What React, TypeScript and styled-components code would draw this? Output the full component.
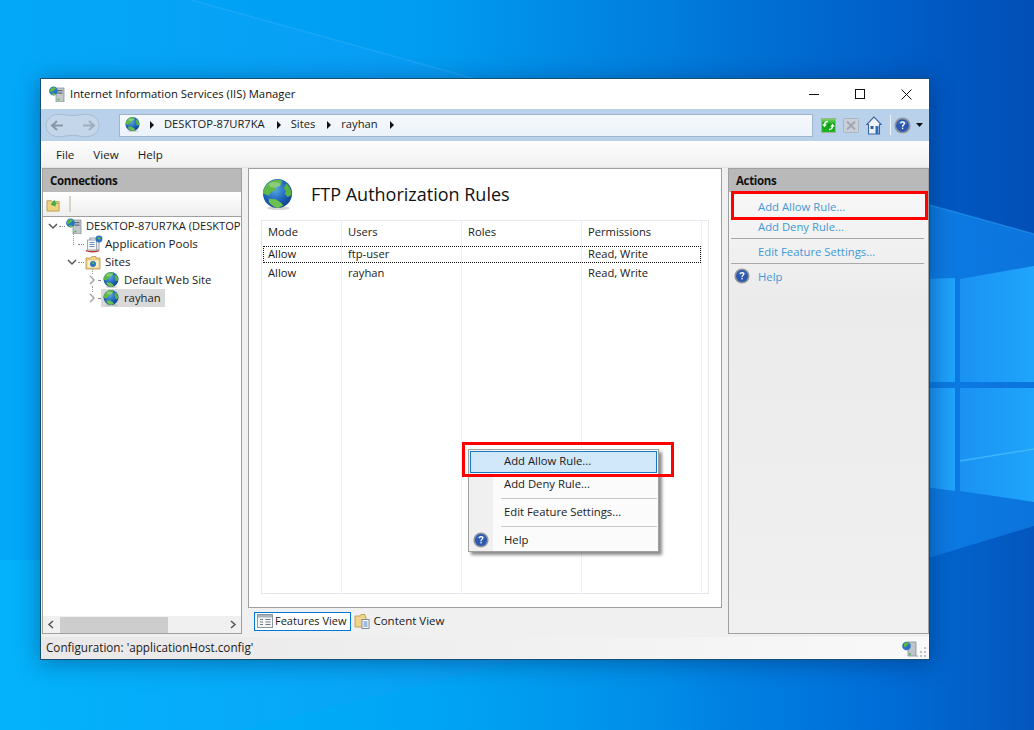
import React from 'react';
import styled, { createGlobalStyle } from 'styled-components';

const Global = createGlobalStyle`
  html, body { margin: 0; padding: 0; width: 1034px; height: 730px; overflow: hidden; }
  body { font-family: "Open Sans", "Noto Sans", "Liberation Sans", sans-serif; font-size: 11.3px; color: #1a1a1a; }
  #root { width: 1034px; height: 730px; }
`;

const Desktop = styled.div`
  position: relative; width: 1034px; height: 730px; overflow: hidden;
  padding: 78px 104px 70px 40px; box-sizing: border-box;
  background: #0a86d8;
`;
const Wallpaper = styled.svg`position: absolute; inset: 0; width: 1034px; height: 730px;`;
const Win = styled.div`
  position: relative; width: 890px; height: 582px; box-sizing: border-box; background: #f0f0f0;
  border: 1px solid #17506e; display: flex; flex-direction: column;
  box-shadow: 0 3px 22px rgba(0,20,60,.38);
`;
const TitleBar = styled.div`
  height: 30px; flex: none; background: #fff; display: flex; align-items: center; padding-left: 8px;
  font-size: 11.3px; color: #111;
`;
const TitleText = styled.span`margin-left: 5px; flex: 1; padding-bottom: 2px;`;
const WinBtn = styled.div`width: 46px; height: 30px; display: flex; align-items: center; justify-content: center;`;
const NavBar = styled.div`
  height: 32px; flex: none; background: #b9d1ea; display: flex; align-items: center; padding-left: 4px;
`;
const AddressBar = styled.div`
  width: 694px; height: 23px; box-sizing: border-box; margin-left: 19px; background: linear-gradient(#f6f9fc, #ecf3fa);
  border: 1px solid #9fb5cc; display: flex; align-items: center; padding: 0 0 1px 5px; font-size: 11.2px; flex: none;
`;
const Crumb = styled.span`margin-right: 12px; padding-bottom: 2px;`;
const Arrow = styled.span<{ $first?: boolean }>`
  width: 0; height: 0; border-left: 4px solid #111; border-top: 4px solid transparent; border-bottom: 4px solid transparent;
  margin: 0 10px 0 ${(p) => (p.$first ? '10px' : '0')};
`;
const NavIcons = styled.div`display: flex; align-items: center; margin-left: 8px;`;
const NavIconSlot = styled.span<{ $gap: number }>`display: flex; margin-left: ${(p) => p.$gap}px;`;
const MenuBar = styled.div`
  height: 27px; flex: none; box-sizing: border-box; background: linear-gradient(#fdfdfd, #f0f0f0); border-bottom: 1px solid #e3e3e3;
  display: flex; align-items: center; padding-left: 15px; gap: 19px; font-size: 11.6px;
`;
const Main = styled.div`flex: 1; display: flex; min-height: 0; padding-left: 1px;`;
const Panel = styled.div`
  width: 200px; height: 466px; flex: none; box-sizing: border-box; border: 1px solid #a0a0a0; display: flex; flex-direction: column;
`;
const ConnPanel = styled(Panel)`background: #fff;`;
const ActionsPanel = styled(Panel)`
  margin-left: 6px; width: 201px; background: linear-gradient(#fafafa, #ebebeb 28%, #f0f0f0);
`;
const PanelHead = styled.div`
  height: 23px; flex: none; background: #b9b9b9; font-weight: 700; font-size: 11.5px; padding: 0 7px;
  display: flex; align-items: center; color: #111; letter-spacing: -0.35px;
`;
const TreeBar = styled.div`
  height: 25px; flex: none; box-sizing: border-box; background: linear-gradient(#fff, #eee); border-bottom: 1px solid #a0a0a0;
  display: flex; align-items: center; padding-left: 3px;
`;
const TreeSep = styled.div`width: 2px; height: 16px; background: #d8d4c4; margin-left: 8px;`;
const Tree = styled.div`flex: 1; min-height: 0; overflow: hidden; position: relative;`;
const TreeRow = styled.div<{ $indent: number }>`
  height: 18px; display: flex; align-items: center; padding-left: ${(p) => p.$indent}px; white-space: nowrap; font-size: 11.6px;
`;
const TreeLine = styled.div<{ $x: number; $t: number; $h: number }>`
  position: absolute; left: ${(p) => p.$x}px; top: ${(p) => p.$t}px; height: ${(p) => p.$h}px; border-left: 1px dotted #999;
`;
const Chevron = styled.svg`width: 10px; height: 10px; flex: none;`;
const Dots = styled.span<{ $w?: number }>`width: ${(p) => p.$w ?? 6}px; flex: none; border-top: 1px dotted #888; margin: 0 1px;`;
const NodeLabel = styled.span<{ $m: number; $size?: number }>`
  margin-left: ${(p) => p.$m}px; padding-bottom: 2px; font-size: ${(p) => p.$size ?? 11.6}px;
`;
const SiteNode = styled.span<{ $sel?: boolean }>`
  display: flex; align-items: center; height: 18px; padding: 0 4px 0 2px; background: ${(p) => (p.$sel ? '#d9d9d9' : 'transparent')};
`;
const HScroll = styled.div`
  height: 17px; flex: none; background: #f0f0f0; display: flex; align-items: center; justify-content: space-between; position: relative;
  padding: 0 4px;
`;
const HThumb = styled.div`position: absolute; left: 17px; top: 1px; width: 108px; height: 16px; background: #cdcdcd;`;
const Center = styled.div`margin-left: 6px; width: 474px; flex: none; display: flex; flex-direction: column;`;
const Content = styled.div`
  height: 440px; flex: none; box-sizing: border-box; background: #fff; border: 1px solid #a0a0a0; padding: 0 12px; display: flex; flex-direction: column; position: relative;
`;
const Heading = styled.div`
  height: 51px; flex: none; display: flex; align-items: center; font-size: 18px; color: #111; padding-left: 1px;
`;
const HeadingText = styled.span`margin-left: 18px; margin-top: -1px;`;
const Grid = styled.div`
  flex: 1; margin-bottom: 13px; border: 1px solid #e4e8ee; display: flex; flex-direction: column; position: relative; font-size: 11.2px;
`;
const GridHead = styled.div`
  display: grid; grid-template-columns: 80px 120px 120px 120px 1fr; height: 25px; flex: none; align-items: center; box-sizing: border-box; padding: 0 0 5px 0; position: relative;
`;
const GridRow = styled.div<{ $focus?: boolean }>`
  display: grid; grid-template-columns: 78px 120px 120px 120px; height: 17px; align-items: center; position: relative; box-sizing: border-box;
  margin: 0 7px 2px 1px; padding: 0 0 2px 1px;
  ${(p) => (p.$focus ? 'outline: 1px dotted #111; outline-offset: -1px;' : '')}
`;
const Cell = styled.div<{ $first?: boolean }>`padding-left: ${(p) => (p.$first ? 4 : 6)}px;`;
const ColLine = styled.div<{ $x: number }>`position: absolute; top: 0; bottom: 0; left: ${(p) => p.$x}px; width: 1px; background: #eef0f6;`;
const ViewTabs = styled.div`height: 29px; flex: none; display: flex; align-items: center; padding: 0 0 2px 6px; box-sizing: border-box;`;
const ViewTab = styled.div<{ $active?: boolean }>`
  height: 19px; display: flex; align-items: center; gap: ${(p) => (p.$active ? 2 : 3)}px; padding: 0 4px 2px 2px; box-sizing: border-box;
  border: 1px solid ${(p) => (p.$active ? '#0078d7' : 'transparent')}; background: ${(p) => (p.$active ? '#fff' : 'transparent')};
  font-size: ${(p) => (p.$active ? 11 : 11.5)}px;
`;
const StatusBar = styled.div`
  height: 22px; flex: none; background: linear-gradient(90deg, #e9e7e7, #f9f9f9); display: flex; align-items: center; justify-content: space-between; padding: 0 1px 0 5px; font-size: 11.7px;
`;
const StatusText = styled.span`padding-bottom: 2px;`;
const ActionLink = styled.div`
  color: #3f99d8; padding: 0 0 2px 29px; box-sizing: border-box; height: 20px; display: flex; align-items: center; white-space: nowrap;
`;
const ActionsList = styled.div`flex: 1; padding-top: 5px; display: flex; flex-direction: column;`;
const ActionSep = styled.div`height: 1px; background: #a8a8a8; margin: 1px 0 3px 2px; width: 193px;`;
const HelpRow = styled.div`
  color: #3f99d8; height: 20px; box-sizing: border-box; display: flex; align-items: center; gap: 8px; padding: 0 0 2px 5px;
`;
const Menu = styled.div`
  position: absolute; left: 219px; top: 280px; width: 191px; height: 103px; box-sizing: border-box; background: #fbfbfb; border: 1px solid #a0a0a0;
  box-shadow: 3px 3px 3px rgba(0,0,0,.45); padding: 1px; z-index: 3; display: flex; flex-direction: column;
`;
const MenuItem = styled.div<{ $hi?: boolean }>`
  height: 22px; flex: none; display: flex; align-items: center; padding: 0 0 2px 34px; box-sizing: border-box; position: relative; font-size: 11.3px;
  ${(p) => (p.$hi ? 'background: #d1e8fb; border: 1px solid #1979c5; padding: 0 0 3px 33px;' : '')}
`;
const MenuGutter = styled.div`position: absolute; left: 0; top: 0; bottom: 0; width: 24px; background: #f0f0f0;`;
const MenuIcon = styled.div`position: absolute; left: 3px; top: 3px;`;
const MenuSep = styled.div`height: 1px; background: #c8c8c8; flex: none; margin: 3px 0 2px 31px; position: relative;`;
const RedBox = styled.div<{ $l: number; $t: number; $w: number; $h: number }>`
  position: absolute; left: ${(p) => p.$l}px; top: ${(p) => p.$t}px; width: ${(p) => p.$w}px; height: ${(p) => p.$h}px; box-sizing: border-box;
  border: 3px solid #f00; z-index: 5; pointer-events: none;
`;

let uid = 0;
const Globe = ({ s = 16 }: { s?: number }) => {
  const id = React.useMemo(() => `g${uid++}`, []);
  return (
    <svg width={s} height={s} viewBox="0 0 32 32" style={{ flex: 'none' }}>
      <defs>
        <radialGradient id={id} cx="0.42" cy="0.35" r="0.7">
          <stop offset="0" stopColor="#5aa9e8" />
          <stop offset="0.6" stopColor="#1c62b8" />
          <stop offset="1" stopColor="#123d85" />
        </radialGradient>
      </defs>
      <ellipse cx="17" cy="30" rx="12" ry="2" fill="#8a8a8a" opacity=".35" />
      <circle cx="16" cy="15" r="15" fill={`url(#${id})`} />
      <path d="M7 3.500c5-3.500 11-3.500 14-1.500l-2 5-4 1-1 4-4 1-3 4-6-2C1 10 4 6 7 3.500z" fill="#5fb848" />
      <path d="M25 4.500c3 2.500 5.500 7 5.500 12l-4 2-3-3 1-3-2-3z" fill="#58b344" />
      <path d="M7 20.500l7 .5 5 3 3 3-5 3c-3 0-7-2.500-10-6z" fill="#6cc04f" />
      <ellipse cx="13" cy="6" rx="6" ry="3" fill="#fff" opacity=".28" />
    </svg>
  );
};

const ServerIcon = ({ s = 16 }: { s?: number }) => (
  <svg width={s} height={s} viewBox="0 0 16 16" style={{ flex: 'none' }}>
    <rect x="7" y="2" width="8" height="14" fill="#c3c7cb" stroke="#7d8890" strokeWidth=".7" />
    <rect x="8.500" y="4" width="5" height="1.200" fill="#5d6870" />
    <rect x="8.500" y="6.500" width="5" height="1.200" fill="#5d6870" />
    <circle cx="9.500" cy="13.500" r="1" fill="#35c43a" />
    <circle cx="4.500" cy="5" r="4.400" fill="#2a73c4" />
    <path d="M2 2.500c2-1.600 4-1.400 5 0l-2 2-3 2-1.200-1.500z" fill="#5cb845" />
    <path d="M3 7l3 .5 1 1.500-3 .5z" fill="#6cc04f" />
  </svg>
);

const PoolsIcon = () => (
  <svg width="18" height="18" viewBox="0 0 18 18" style={{ flex: 'none' }}>
    <rect x="5" y="3" width="9" height="12" fill="#e9eef4" stroke="#7f8b9a" strokeWidth=".8" />
    <rect x="2.500" y="5" width="9" height="10" fill="#f6f6f6" stroke="#8b95a0" strokeWidth=".8" />
    <path d="M4.500 7.500h5M4.500 9.500h5M4.500 11.500h5" stroke="#5e86b8" strokeWidth=".9" />
    <path d="M1 15.500c2 1.600 11 1.600 13 0" stroke="#c0392b" strokeWidth="1.400" fill="none" />
    <circle cx="14" cy="4" r="3.400" fill="#2a73c4" />
    <path d="M12 2.500l3-.6 1 1.400-2 1.800z" fill="#5cb845" />
  </svg>
);

const SitesIcon = () => (
  <svg width="16" height="16" viewBox="0 0 16 16" style={{ flex: 'none' }}>
    <path d="M1 4h5l1-1.500h4V4h4v11H1z" fill="#f2d488" stroke="#b8954a" strokeWidth=".8" />
    <rect x="2" y="6" width="12" height="8" fill="#fbeec2" stroke="#cdb06a" strokeWidth=".5" />
    <circle cx="8" cy="10" r="3" fill="#2a73c4" />
    <path d="M6.500 9l2-1 1 1-1.500 1.500z" fill="#5cb845" />
  </svg>
);

const HelpIcon = ({ s = 16 }: { s?: number }) => (
  <svg width={s} height={s} viewBox="0 0 16 16" style={{ flex: 'none' }}>
    <circle cx="8" cy="8" r="7.600" fill="#8f949b" />
    <circle cx="8" cy="8" r="6" fill="#2c58b0" />
    <path d="M3.500 6.500a5 5 0 0 1 9 0c-3-1.500-6-1.500-9 0z" fill="#7f9fdc" opacity=".7" />
    <path d="M5.800 6.200c0-1.400 1.100-2.200 2.300-2.200 1.300 0 2.300.8 2.300 2 0 1.600-1.800 1.600-1.800 3.200H7.400c0-2.100 1.600-2.100 1.600-3.200 0-.5-.4-.8-.9-.8-.6 0-1 .4-1 1z" fill="#fff" />
    <rect x="7.400" y="10" width="1.300" height="1.400" fill="#fff" />
  </svg>
);

const ChevDown = () => (
  <Chevron viewBox="0 0 10 10"><path d="M1 3l4 4 4-4" fill="none" stroke="#555" strokeWidth="1.500" /></Chevron>
);
const ChevRight = () => (
  <Chevron viewBox="0 0 10 10"><path d="M3 1l4 4-4 4" fill="none" stroke="#a6a6a6" strokeWidth="1.500" /></Chevron>
);

const Minimize = () => <svg width="10" height="10"><path d="M0 5.500h10" stroke="#111" /></svg>;
const Maximize = () => <svg width="10" height="10"><rect x=".5" y=".5" width="9" height="9" fill="none" stroke="#111" /></svg>;
const CloseX = () => <svg width="11" height="11"><path d="M.5.500l10 10M10.500.500l-10 10" stroke="#111" /></svg>;

export default function App() {
  return (
    <Desktop>
      <Global />
      <Wallpaper viewBox="0 0 1034 730">
        <defs>
          <linearGradient id="wpBase" x1="0" y1="0" x2="1" y2="0">
            <stop offset="0" stopColor="#00a8f8" />
            <stop offset="0.4" stopColor="#009df2" />
            <stop offset="0.65" stopColor="#0088e6" />
            <stop offset="0.85" stopColor="#006ed8" />
            <stop offset="1" stopColor="#0456bd" />
          </linearGradient>
          <linearGradient id="wpTop" x1="0" y1="0" x2="1" y2="0">
            <stop offset="0.3" stopColor="#0046b0" stopOpacity="0" />
            <stop offset="1" stopColor="#0046b0" stopOpacity=".45" />
          </linearGradient>
          <linearGradient id="wpBottom" x1="0" y1="0" x2="0.7" y2="0">
            <stop offset="0" stopColor="#00b4fa" stopOpacity=".9" />
            <stop offset="1" stopColor="#00b4fa" stopOpacity="0" />
          </linearGradient>
          <linearGradient id="wpWedge" x1="0" y1="0" x2="1" y2="0">
            <stop offset="0" stopColor="#20a8ff" stopOpacity=".1" />
            <stop offset="1" stopColor="#1288f2" stopOpacity=".6" />
          </linearGradient>
          <linearGradient id="pane" x1="0" y1="0" x2="1" y2="0">
            <stop offset="0" stopColor="#1a92f3" />
            <stop offset="1" stopColor="#1fa5fb" />
          </linearGradient>
        </defs>
        <rect width="1034" height="730" fill="url(#wpBase)" />
        <rect y="560" width="1034" height="170" fill="url(#wpBottom)" />
        <path d="M191 0H1034V234z" fill="url(#wpTop)" />
        <path d="M191 0L1034 234V526L925 559 0 790V0z" fill="url(#wpWedge)" />
        <path d="M191 0L1034 234" stroke="#3ab2fb" strokeWidth="1.500" opacity=".4" />
        <path d="M925 279L955 278V382H925zM925 388H955V491L925 487z" fill="url(#pane)" />
        <path d="M960 279L1034 266V382H960zM960 388H1034V502L960 491z" fill="url(#pane)" />
        <path d="M960 461L1034 449" stroke="#4ec0ff" strokeWidth="1.500" opacity=".7" />
      </Wallpaper>
      <Win>
        <TitleBar>
          <ServerIcon />
          <TitleText>Internet Information Services (IIS) Manager</TitleText>
          <WinBtn><Minimize /></WinBtn>
          <WinBtn><Maximize /></WinBtn>
          <WinBtn><CloseX /></WinBtn>
        </TitleBar>
        <NavBar>
          <svg width="55" height="27" viewBox="0 0 55 27" style={{ flex: 'none' }}>
            <path d="M1 13.500C1 5 10 1 18 2.500c7 1.500 12 1.500 19 0C45 1 54 5 54 13.500S45 26 37 24.500c-7-1.500-12-1.500-19 0C10 26 1 22 1 13.500z" fill="#c4d7ea" stroke="#a6bcd3" />
            <path d="M18 13.500H7m5-4.500l-5 4.500 5 4.500" fill="none" stroke="#8797a8" strokeWidth="2" />
            <path d="M38 13.500h11m-5-4.500l5 4.500-5 4.500" fill="none" stroke="#9eaebe" strokeWidth="2" />
          </svg>
          <AddressBar>
            <Globe s={15} />
            <Arrow $first />
            <Crumb>DESKTOP-87UR7KA</Crumb>
            <Arrow />
            <Crumb>Sites</Crumb>
            <Arrow />
            <Crumb>rayhan</Crumb>
            <Arrow />
          </AddressBar>
          <NavIcons>
            <svg width="15" height="15" viewBox="0 0 15 15">
              <defs>
                <linearGradient id="greenBtn" x1="0" y1="0" x2="0" y2="1">
                  <stop offset="0" stopColor="#7ddc6e" />
                  <stop offset="0.45" stopColor="#0aa012" />
                  <stop offset="1" stopColor="#27b52b" />
                </linearGradient>
              </defs>
              <rect x=".5" y=".5" width="14" height="14" fill="url(#greenBtn)" stroke="#9fb487" />
              <path d="M7 3.500C4.500 3.500 3.500 5 3.500 7.500M1.800 6.300l1.700 2 1.700-2" fill="none" stroke="#fff" strokeWidth="1.300" />
              <path d="M8 11.500c2.500 0 3.500-1.500 3.500-4M9.800 8.700l1.700-2 1.700 2" fill="none" stroke="#fff" strokeWidth="1.300" />
            </svg>
            <NavIconSlot $gap={7}>
              <svg width="16" height="15" viewBox="0 0 16 15">
                <rect x=".5" y=".5" width="15" height="14" rx="1" fill="#c8d1da" stroke="#aab5c0" />
                <path d="M4 3.500l8 8m0-8l-8 8" stroke="#a0a9b2" strokeWidth="2" />
              </svg>
            </NavIconSlot>
            <NavIconSlot $gap={7}>
              <svg width="16" height="19" viewBox="0 0 16 19">
                <path d="M8 1L.7 8.500H2.500V18h11V8.500h1.800z" fill="#eef2f6" stroke="#3a64a8" strokeWidth="1.100" />
                <rect x="4.500" y="10" width="3" height="3" fill="#34609e" />
                <rect x="9.500" y="10" width="3" height="8" fill="#2d6fb8" />
              </svg>
            </NavIconSlot>
            <NavIconSlot $gap={8}>
              <svg width="1" height="20"><rect width="1" height="20" fill="#eef4fa" /></svg>
            </NavIconSlot>
            <NavIconSlot $gap={3}><HelpIcon s={17} /></NavIconSlot>
            <NavIconSlot $gap={5}>
              <svg width="7" height="4"><path d="M0 0h7L3.500 4z" fill="#111" /></svg>
            </NavIconSlot>
          </NavIcons>
        </NavBar>
        <MenuBar>
          <span>File</span>
          <span>View</span>
          <span>Help</span>
        </MenuBar>
        <Main>
          <ConnPanel>
            <PanelHead>Connections</PanelHead>
            <TreeBar>
              <svg width="15" height="15" viewBox="0 0 16 16">
                <path d="M1 4h5l1 1h7v10H1z" fill="#efd27c" stroke="#a88c44" strokeWidth=".8" />
                <path d="M5 8l4-5 1.500 3c1 0 2 .5 3 1-1.500 0-2.500 0-3 .5L10 10z" fill="#3fae49" />
              </svg>
              <TreeSep />
            </TreeBar>
            <Tree>
              <TreeLine $x={30} $t={15} $h={13} />
              <TreeLine $x={49} $t={52} $h={5} />
              <TreeLine $x={49} $t={69} $h={6} />
              <TreeRow $indent={5}><ChevDown /><Dots /><ServerIcon /><NodeLabel $m={4} $size={11.1}>DESKTOP-87UR7KA (DESKTOP</NodeLabel></TreeRow>
              <TreeRow $indent={34}><Dots /><PoolsIcon /><NodeLabel $m={2}>Application Pools</NodeLabel></TreeRow>
              <TreeRow $indent={24}><ChevDown /><Dots /><SitesIcon /><NodeLabel $m={4}>Sites</NodeLabel></TreeRow>
              <TreeRow $indent={44}><ChevRight /><Dots $w={2} /><SiteNode><Globe /><NodeLabel $m={5} $size={11.3}>Default Web Site</NodeLabel></SiteNode></TreeRow>
              <TreeRow $indent={44}><ChevRight /><Dots $w={2} /><SiteNode $sel><Globe /><NodeLabel $m={5} $size={11.3}>rayhan</NodeLabel></SiteNode></TreeRow>
            </Tree>
            <HScroll>
              <HThumb />
              <svg width="8" height="9" viewBox="0 0 8 9"><path d="M6 1L2 4.500 6 8" fill="none" stroke="#555" strokeWidth="1.500" /></svg>
              <svg width="8" height="9" viewBox="0 0 8 9"><path d="M2 1l4 3.500L2 8" fill="none" stroke="#555" strokeWidth="1.500" /></svg>
            </HScroll>
          </ConnPanel>
          <Center>
            <Content>
              <Heading><Globe s={31} /><HeadingText>FTP Authorization Rules</HeadingText></Heading>
              <Grid>
                <ColLine $x={79} /><ColLine $x={199} /><ColLine $x={319} /><ColLine $x={439} />
                <GridHead>
                  <Cell>Mode</Cell><Cell>Users</Cell><Cell>Roles</Cell><Cell>Permissions</Cell><Cell />
                </GridHead>
                <GridRow $focus>
                  <Cell $first>Allow</Cell><Cell>ftp-user</Cell><Cell /><Cell>Read, Write</Cell>
                </GridRow>
                <GridRow>
                  <Cell $first>Allow</Cell><Cell>rayhan</Cell><Cell /><Cell>Read, Write</Cell>
                </GridRow>
              </Grid>
              <Menu>
                <MenuGutter />
                <MenuItem $hi>Add Allow Rule...</MenuItem>
                <MenuItem>Add Deny Rule...</MenuItem>
                <MenuSep />
                <MenuItem>Edit Feature Settings...</MenuItem>
                <MenuSep />
                <MenuItem><MenuIcon><HelpIcon /></MenuIcon>Help</MenuItem>
              </Menu>
            </Content>
            <ViewTabs>
              <ViewTab $active>
                <svg width="16" height="16" viewBox="0 0 16 16">
                  <rect x=".5" y="1.500" width="15" height="13" fill="#f5f5f5" stroke="#8d97a3" />
                  <rect x="1" y="2" width="14" height="2.500" fill="#a9b4c0" />
                  <path d="M3 6.500h3M3 9h3M3 11.500h3M8.500 6.500h5M8.500 9h5M8.500 11.500h5" stroke="#6f7a86" />
                </svg>
                Features View
              </ViewTab>
              <ViewTab>
                <svg width="16" height="16" viewBox="0 0 16 16">
                  <path d="M1 3h5l1-1.500h4V3l1 1v10H1z" fill="#f1d489" stroke="#b8954a" strokeWidth=".8" />
                  <rect x="8" y="6.500" width="7" height="9" fill="#fff" stroke="#7f8b9a" />
                  <path d="M9.500 9h4M9.500 11h4M9.500 13h4" stroke="#3a7bc8" />
                </svg>
                Content View
              </ViewTab>
            </ViewTabs>
          </Center>
          <ActionsPanel>
            <PanelHead>Actions</PanelHead>
            <ActionsList>
              <ActionLink>Add Allow Rule...</ActionLink>
              <ActionLink>Add Deny Rule...</ActionLink>
              <ActionSep />
              <ActionLink>Edit Feature Settings...</ActionLink>
              <ActionSep />
              <HelpRow><HelpIcon />Help</HelpRow>
            </ActionsList>
          </ActionsPanel>
        </Main>
        <StatusBar>
          <StatusText>Configuration: 'applicationHost.config'</StatusText>
          <svg width="26" height="17" viewBox="0 0 26 17">
            <rect x="6" y="2" width="8" height="14" fill="#bfc5ca" stroke="#7d8890" strokeWidth=".7" />
            <circle cx="8" cy="14" r="1" fill="#35c43a" />
            <circle cx="4.500" cy="6" r="4.300" fill="#2a73c4" />
            <path d="M2 3.500c2-1.600 4-1.400 5 0l-2 2-3 2z" fill="#5cb845" />
            <path d="M22 7h2v2h-2zM22 11h2v2h-2zM18 11h2v2h-2zM22 15h2v2h-2zM18 15h2v2h-2zM14 15h2v2h-2z" fill="#c3c3c3" />
          </svg>
        </StatusBar>
        <RedBox $l={690} $t={112} $w={197} $h={29} />
        <RedBox $l={421} $t={363} $w={212} $h={35} />
      </Win>
    </Desktop>
  );
}
